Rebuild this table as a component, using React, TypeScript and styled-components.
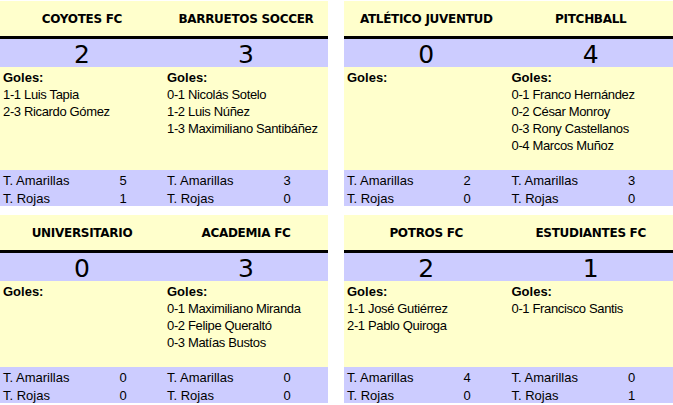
import styled, { createGlobalStyle } from 'styled-components';

const GlobalStyle = createGlobalStyle`
  html, body {
    margin: 0;
    padding: 0;
    background: #ffffff;
  }
  body {
    font-family: 'Liberation Sans', Arial, sans-serif;
    color: #000;
  }
`;

type Team = {
  nombre: string;
  goles: number;
  anotadores: string[];
  amarillas: number;
  rojas: number;
};

type Partido = { local: Team; visita: Team };

const partidos: Partido[] = [
  {
    local: { nombre: 'COYOTES FC', goles: 2, anotadores: ['1-1 Luis Tapia', '2-3 Ricardo Gómez'], amarillas: 5, rojas: 1 },
    visita: {
      nombre: 'BARRUETOS SOCCER',
      goles: 3,
      anotadores: ['0-1 Nicolás Sotelo', '1-2 Luis Núñez', '1-3 Maximiliano Santibáñez'],
      amarillas: 3,
      rojas: 0,
    },
  },
  {
    local: { nombre: 'ATLÉTICO JUVENTUD', goles: 0, anotadores: [], amarillas: 2, rojas: 0 },
    visita: {
      nombre: 'PITCHBALL',
      goles: 4,
      anotadores: ['0-1 Franco Hernández', '0-2 César Monroy', '0-3 Rony Castellanos', '0-4 Marcos Muñoz'],
      amarillas: 3,
      rojas: 0,
    },
  },
  {
    local: { nombre: 'UNIVERSITARIO', goles: 0, anotadores: [], amarillas: 0, rojas: 0 },
    visita: {
      nombre: 'ACADEMIA FC',
      goles: 3,
      anotadores: ['0-1 Maximiliano Miranda', '0-2 Felipe Queraltó', '0-3 Matías Bustos'],
      amarillas: 0,
      rojas: 0,
    },
  },
  {
    local: { nombre: 'POTROS FC', goles: 2, anotadores: ['1-1 José Gutiérrez', '2-1 Pablo Quiroga'], amarillas: 4, rojas: 0 },
    visita: { nombre: 'ESTUDIANTES FC', goles: 1, anotadores: ['0-1 Francisco Santis'], amarillas: 0, rojas: 1 },
  },
];

const Page = styled.div`
  padding-top: 1px;
  display: grid;
  grid-template-columns: 328px 329px;
  column-gap: 16px;
  row-gap: 9px;
`;

const Card = styled.div`
  display: flex;
  flex-direction: column;
  background: #ffffcc;
`;

const Halves = styled.div`
  display: grid;
  grid-template-columns: 1fr 1fr;
`;

const Header = styled(Halves)`
  height: 35px;
  border-bottom: 3px solid #000;
`;

const TeamName = styled.div`
  font-family: 'DejaVu Sans', Tahoma, sans-serif;
  font-weight: bold;
  font-size: 12px;
  letter-spacing: -0.3px;
  display: flex;
  align-items: center;
  justify-content: center;
  white-space: nowrap;
`;

const ScoreBand = styled(Halves)`
  background: #ccccff;
  height: 28px;
`;

const Score = styled.div`
  font-family: 'DejaVu Sans', Tahoma, sans-serif;
  font-size: 25px;
  padding-top: 3px;
  line-height: 25px;
  text-align: center;
`;

const GoalsArea = styled(Halves)`
  flex: 1;
  padding-top: 2px;
  padding-bottom: 16px;
`;

const GoalList = styled.div`
  padding-left: 3px;
  font-size: 13px;
  letter-spacing: -0.35px;
  line-height: 17px;
  white-space: nowrap;
`;

const GoalsTitle = styled.div`
  font-weight: bold;
  letter-spacing: 0;
`;

const Stats = styled(Halves)`
  background: #ccccff;
`;

const StatRow = styled.div`
  display: grid;
  grid-template-columns: 107px 26px 1fr;
  box-sizing: border-box;
  padding: 3px 0 0 3px;
  font-size: 13px;
  height: 18px;
  line-height: 15px;
`;

const StatValue = styled.span`
  text-align: center;
`;

function TeamStats({ team }: { team: Team }) {
  return (
    <div>
      <StatRow>
        <span>T. Amarillas</span>
        <StatValue>{team.amarillas}</StatValue>
      </StatRow>
      <StatRow>
        <span>T. Rojas</span>
        <StatValue>{team.rojas}</StatValue>
      </StatRow>
    </div>
  );
}

function Goals({ team }: { team: Team }) {
  return (
    <GoalList>
      <GoalsTitle>Goles:</GoalsTitle>
      {team.anotadores.map((g) => (
        <div key={g}>{g}</div>
      ))}
    </GoalList>
  );
}

function MatchCard({ partido }: { partido: Partido }) {
  const { local, visita } = partido;
  return (
    <Card>
      <Header>
        <TeamName>{local.nombre}</TeamName>
        <TeamName>{visita.nombre}</TeamName>
      </Header>
      <ScoreBand>
        <Score>{local.goles}</Score>
        <Score>{visita.goles}</Score>
      </ScoreBand>
      <GoalsArea>
        <Goals team={local} />
        <Goals team={visita} />
      </GoalsArea>
      <Stats>
        <TeamStats team={local} />
        <TeamStats team={visita} />
      </Stats>
    </Card>
  );
}

export default function App() {
  return (
    <>
      <GlobalStyle />
      <Page>
        {partidos.map((p, i) => (
          <MatchCard key={i} partido={p} />
        ))}
      </Page>
    </>
  );
}
